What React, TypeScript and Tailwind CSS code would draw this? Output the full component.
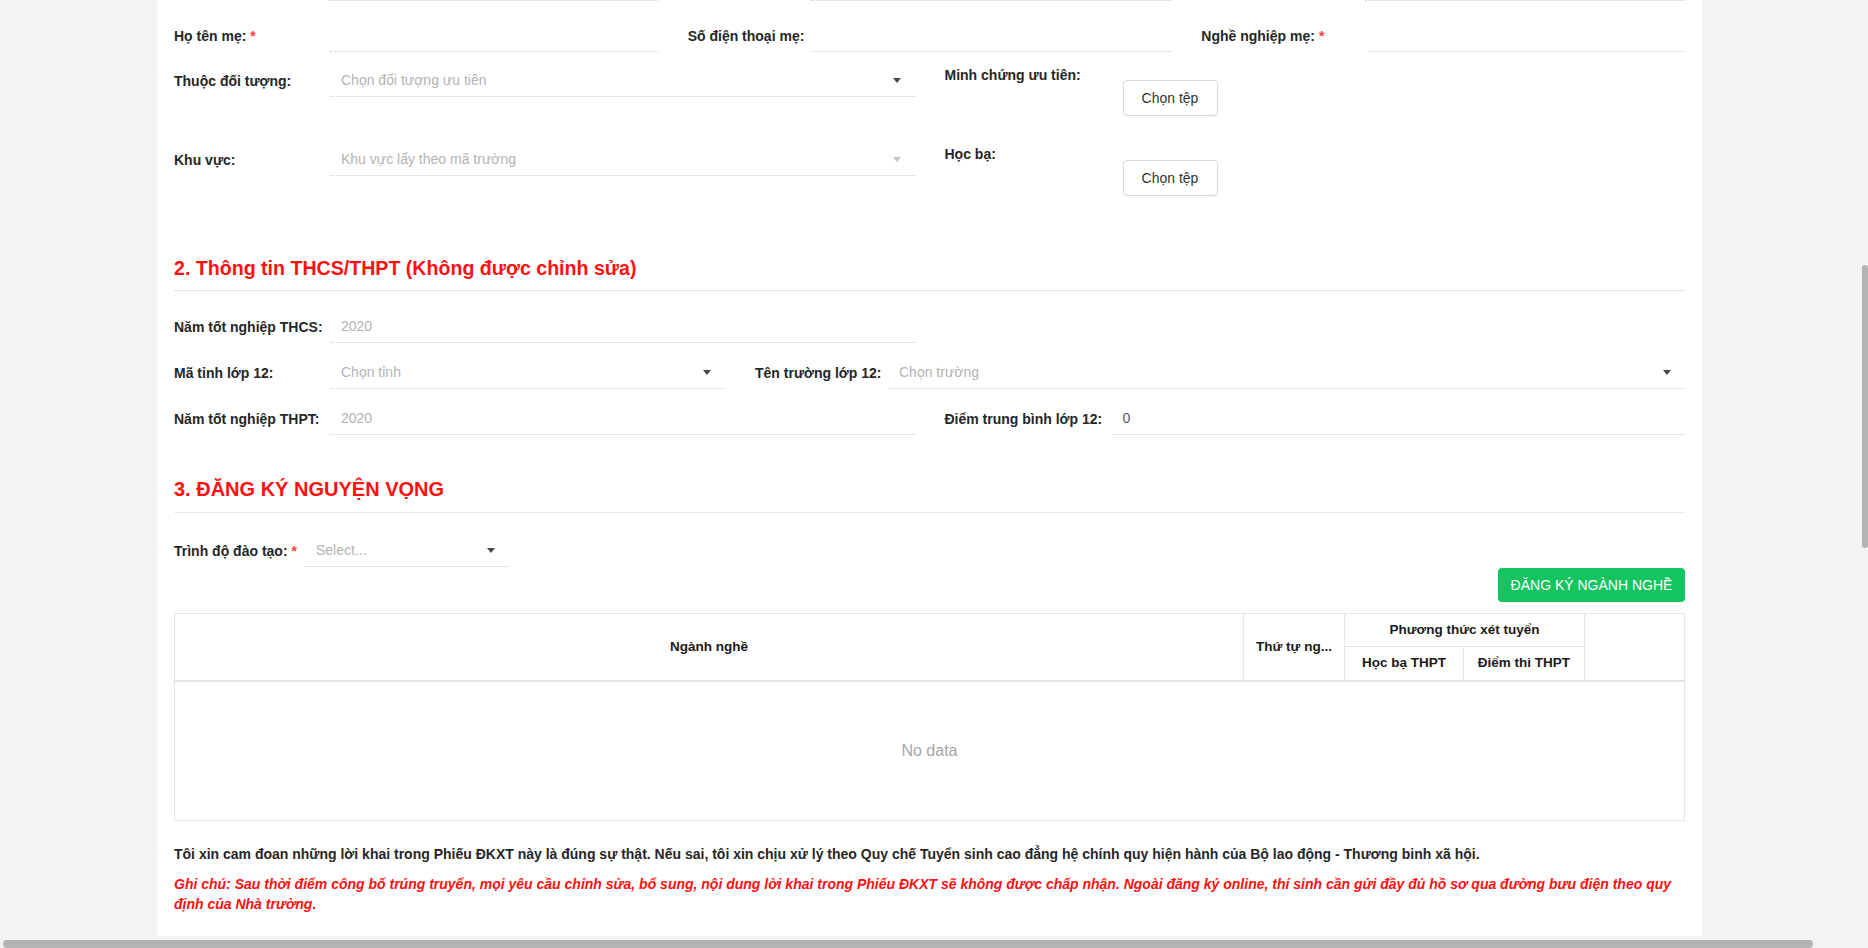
import React from "react";

function Caret({ light }: { light?: boolean }) {
  return (
    <svg width="8" height="5" viewBox="0 0 8 5" className={light ? "fill-[#c4c4c4]" : "fill-[#4a4a4a]"}>
      <path d="M0 0h8L4 5z" />
    </svg>
  );
}

function Label({ text, req, className }: { text: string; req?: boolean; className: string }) {
  return (
    <div className={"shrink-0 text-[14px] leading-[20px] font-bold text-[#262626] " + className}>
      {text}
      {req && <span className="ml-1 text-[#ff3b3b]">*</span>}
    </div>
  );
}

function Box({
  text,
  tone = "placeholder",
  caret,
  lightCaret,
  className = "flex-1",
}: {
  text?: string;
  tone?: "placeholder" | "value";
  caret?: boolean;
  lightCaret?: boolean;
  className?: string;
}) {
  return (
    <div
      className={
        "h-[32px] border-b border-dotted border-[#cfcfcf] flex items-center justify-between pl-[11px] pr-[14px] text-[14px] " +
        className
      }
    >
      <span className={tone === "value" ? "text-[#595959]" : "text-[#b3b3b3]"}>{text}</span>
      {caret && <Caret light={lightCaret} />}
    </div>
  );
}

function FileButton() {
  return (
    <button className="h-[36px] w-[95px] rounded-[4px] border border-[#d9d9d9] bg-white text-[14px] text-[#333] shadow-[0_1px_2px_rgba(0,0,0,0.04)]">
      Chọn tệp
    </button>
  );
}

export default function App() {
  return (
    <div className="w-[1868px] h-[948px] overflow-hidden bg-[#f3f3f3] font-['Liberation_Sans',Arial,sans-serif] flex flex-col">
      <div className="h-[936px] flex">
        <div className="flex-1 pl-[157px]">
          <div className="w-[1545px] h-[936px] bg-white px-[17px] overflow-hidden flex flex-col">
            {/* tail of the previous row */}
            <div className="grid grid-cols-3 gap-x-[30px] h-[2px]">
              <div className="pl-[155px]">
                <div className="border-b border-dotted border-[#cfcfcf]" />
              </div>
              <div className="pl-[123px]">
                <div className="border-b border-dotted border-[#cfcfcf]" />
              </div>
              <div className="pl-[164px]">
                <div className="border-b border-dotted border-[#cfcfcf]" />
              </div>
            </div>

            {/* Row 1 */}
            <div className="grid grid-cols-3 gap-x-[30px] mt-[18px]">
              <div className="flex items-center">
                <Label text="Họ tên mẹ:" req className="w-[156px]" />
                <Box />
              </div>
              <div className="flex items-center">
                <Label text="Số điện thoại mẹ:" className="w-[124px]" />
                <Box />
              </div>
              <div className="flex items-center">
                <Label text="Nghề nghiệp mẹ:" req className="w-[167px]" />
                <Box />
              </div>
            </div>

            {/* Row 2 */}
            <div className="grid grid-cols-2 gap-x-[30px] mt-[13px] items-start">
              <div className="flex items-center">
                <Label text="Thuộc đối tượng:" className="w-[156px]" />
                <Box text="Chọn đối tượng ưu tiên" caret />
              </div>
              <div className="flex items-start">
                <Label text="Minh chứng ưu tiên:" className="w-[178px]" />
                <div className="mt-[15px]">
                  <FileButton />
                </div>
              </div>
            </div>

            {/* Row 3 */}
            <div className="grid grid-cols-2 gap-x-[30px] mt-[28px] items-start">
              <div className="flex items-center">
                <Label text="Khu vực:" className="w-[156px]" />
                <Box text="Khu vực lấy theo mã trường" caret lightCaret />
              </div>
              <div className="flex items-start">
                <Label text="Học bạ:" className="w-[178px]" />
                <div className="mt-[16px]">
                  <FileButton />
                </div>
              </div>
            </div>

            {/* Section 2 */}
            <div className="mt-[58px] pb-[8px] border-b border-[#e3e3e3]">
              <h2 className="text-[19.6px] leading-[28px] font-bold text-[#ff1010]">
                2. Thông tin THCS/THPT (Không được chỉnh sửa)
              </h2>
            </div>

            <div className="grid grid-cols-2 gap-x-[30px] mt-[20px]">
              <div className="flex items-center">
                <Label text="Năm tốt nghiệp THCS:" className="w-[156px]" />
                <Box text="2020" />
              </div>
            </div>

            <div className="grid grid-cols-[551px_1fr] gap-x-[30px] mt-[14px]">
              <div className="flex items-center">
                <Label text="Mã tỉnh lớp 12:" className="w-[156px]" />
                <Box text="Chọn tỉnh" caret />
              </div>
              <div className="flex items-center">
                <Label text="Tên trường lớp 12:" className="w-[133px]" />
                <Box text="Chọn trường" caret />
              </div>
            </div>

            <div className="grid grid-cols-2 gap-x-[30px] mt-[14px]">
              <div className="flex items-center">
                <Label text="Năm tốt nghiệp THPT:" className="w-[156px]" />
                <Box text="2020" />
              </div>
              <div className="flex items-center">
                <Label text="Điểm trung bình lớp 12:" className="w-[167px]" />
                <Box text="0" tone="value" />
              </div>
            </div>

            {/* Section 3 */}
            <div className="mt-[40px] pb-[9px] border-b border-[#ececec]">
              <h2 className="text-[20px] leading-[28px] font-bold text-[#ff1010]">3. ĐĂNG KÝ NGUYỆN VỌNG</h2>
            </div>

            <div className="flex items-center mt-[22px]">
              <Label text="Trình độ đào tạo:" req className="w-[131px]" />
              <Box text="Select..." caret className="w-[204px]" />
            </div>

            <div className="flex justify-end mt-[1px]">
              <button className="h-[34px] w-[187px] rounded-[4px] bg-[#14c45f] text-[14px] text-white">
                ĐĂNG KÝ NGÀNH NGHỀ
              </button>
            </div>

            {/* Table */}
            <div className="mt-[11px] border border-[#e6e6e6]">
              <div className="grid grid-cols-[1069px_101px_119px_121px_1fr] grid-rows-[33px_33px] border-b-2 border-[#e3e3e3] text-[13.5px] font-bold text-[#1a1a1a]">
                <div className="row-span-2 flex items-center justify-center border-r border-[#e6e6e6]">Ngành nghề</div>
                <div className="row-span-2 flex items-center justify-center border-r border-[#e6e6e6] px-2">
                  <span className="truncate">Thứ tự ng...</span>
                </div>
                <div className="col-span-2 flex items-center justify-center border-r border-b border-[#e6e6e6]">
                  Phương thức xét tuyển
                </div>
                <div className="row-span-2" />
                <div className="flex items-center justify-center border-r border-[#e6e6e6]">Học bạ THPT</div>
                <div className="flex items-center justify-center border-r border-[#e6e6e6]">Điểm thi THPT</div>
              </div>
              <div className="h-[138px] flex items-center justify-center text-[16px] text-[#a6a6a6]">No data</div>
            </div>

            {/* Notes */}
            <p className="mt-[23px] text-[14px] leading-[20px] font-bold text-[#262626] whitespace-nowrap">
              Tôi xin cam đoan những lời khai trong Phiếu ĐKXT này là đúng sự thật. Nếu sai, tôi xin chịu xử lý theo Quy chế
              Tuyển sinh cao đẳng hệ chính quy hiện hành của Bộ lao động - Thương binh xã hội.
            </p>
            <p className="mt-[10px] text-[14px] leading-[20px] font-bold italic text-[#ff1010] whitespace-nowrap">
              Ghi chú: Sau thời điểm công bố trúng truyển, mọi yêu cầu chỉnh sửa, bổ sung, nội dung lời khai trong Phiếu ĐKXT
              sẽ không được chấp nhận. Ngoài đăng ký online, thí sinh cần gửi đầy đủ hồ sơ qua đường bưu điện theo quy
              <br />
              định của Nhà trường.
            </p>
          </div>
        </div>
        {/* vertical scrollbar */}
        <div className="w-[10px] pt-[265px] flex justify-end">
          <div className="w-[6px] h-[283px] rounded-full bg-[#b3b3b3]" />
        </div>
      </div>
      <div className="h-[4px]" />
      {/* horizontal scrollbar */}
      <div className="h-[8px] pl-[3px]">
        <div className="w-[1810px] h-full rounded-full bg-[#b3b3b3]" />
      </div>
    </div>
  );
}
